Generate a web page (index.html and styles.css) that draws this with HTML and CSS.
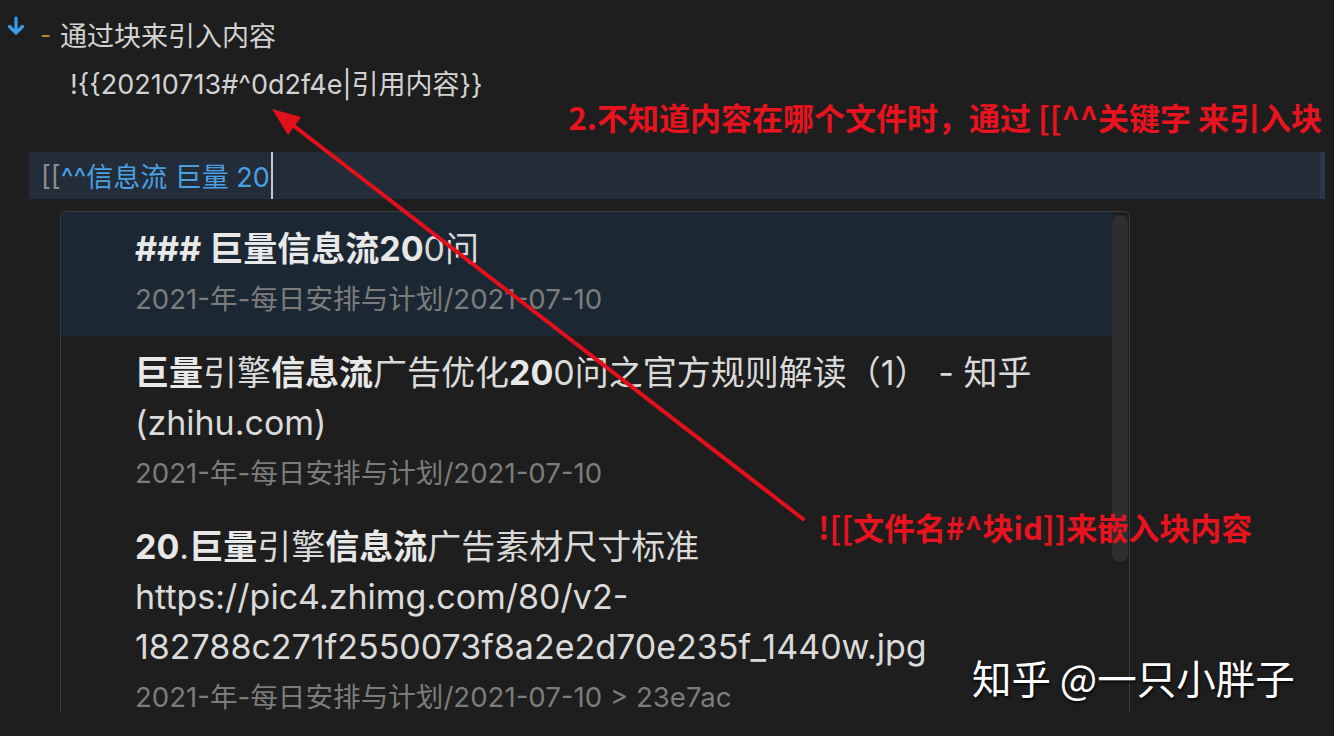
FILE: index.html
```html
<!DOCTYPE html>
<html lang="zh-CN">
<head>
<meta charset="utf-8">
<title>块引用</title>
<link rel="stylesheet" href="styles.css">
</head>
<body>
<div class="page">
  <div class="editor">
    <div class="row bullet-row">
      <span class="collapse-icon">
        <svg width="18" height="20" viewBox="0 0 18 20"><path d="M9 2 V17 M2.5 10.5 L9 17 L15.5 10.5" fill="none" stroke="#3b9de9" stroke-width="3.2" stroke-linecap="round" stroke-linejoin="round"/></svg>
      </span>
      <span class="dash">-</span>
      <span class="text">通过块来引入内容</span>
    </div>
    <div class="row child-row">
      <span class="text">!{{20210713#^0d2f4e|引用内容}}</span>
    </div>
    <div class="active-line">
      <span class="brackets">[[</span><span class="query">^^信息流 巨量 20</span><span class="cursor"></span>
    </div>
    <div class="popup">
      <div class="list">
        <div class="item selected">
          <div class="title"><b>### 巨量信息流20</b>0问</div>
          <div class="path">2021-年-每日安排与计划/2021-07-10</div>
        </div>
        <div class="item">
          <div class="title"><b>巨量</b>引擎<b>信息流</b>广告优化<b>20</b>0问之官方规则解读（1） - 知乎<br>(zhihu.com)</div>
          <div class="path">2021-年-每日安排与计划/2021-07-10</div>
        </div>
        <div class="item">
          <div class="title"><b>20</b>.<b>巨量</b>引擎<b>信息流</b>广告素材尺寸标准<br>https://pic4.zhimg.com/80/v2-<br>182788c271f2550073f8a2e2d70e235f_1440w.jpg</div>
          <div class="path">2021-年-每日安排与计划/2021-07-10 &gt; 23e7ac</div>
        </div>
      </div>
      <div class="gutter"><div class="thumb"></div></div>
    </div>
  </div>

  <svg class="arrow" width="1334" height="736" viewBox="0 0 1334 736">
    <line x1="803" y1="519" x2="294" y2="126" stroke="#e3101c" stroke-width="4" stroke-linecap="round"/>
    <polygon points="272,109 301,117 288,135" fill="#e3101c"/>
  </svg>
  <div class="note note-top">2.不知道内容在哪个文件时，通过 [[^^关键字 来引入块</div>
  <div class="note note-bottom">![[文件名#^块id]]来嵌入块内容</div>
  <div class="watermark">知乎 @一只小胖子</div>
</div>
</body>
</html>
```

FILE: styles.css
```css
html, body {
  margin: 0;
  padding: 0;
  background: #1e1e1e;
}

.page {
  position: relative;
  width: 1334px;
  height: 736px;
  overflow: hidden;
  background: #1e1e1e;
  font-family: "Inter", "Noto Sans CJK SC", sans-serif;
  color: #d2d2d2;
}

.editor {
  display: flex;
  flex-direction: column;
  padding-top: 10px;
}

.row {
  display: flex;
  align-items: center;
  height: 48px;
  font-size: 27px;
}

.bullet-row {
  padding-left: 7px;
}

.collapse-icon {
  display: flex;
  width: 33px;
  height: 48px;
  align-items: flex-start;
  padding-top: 6px;
  box-sizing: border-box;
}

.dash {
  width: 20px;
  color: #c98238;
  font-size: 24px;
}

.child-row {
  padding-left: 70px;
}

.active-line {
  display: flex;
  align-items: center;
  margin-top: 46px;
  margin-left: 29px;
  width: 1296px;
  height: 47px;
  padding-left: 12px;
  box-sizing: border-box;
  background: #222d39;
  border-right: 5px solid #28384a;
  font-size: 27px;
}

.brackets {
  color: #8d8d8d;
}

.query {
  color: #4c9fe0;
}

.cursor {
  width: 2px;
  height: 47px;
  margin-left: 1px;
  background: #c8c8c8;
}

.popup {
  display: flex;
  margin-top: 12px;
  margin-left: 60px;
  width: 1070px;
  height: 501px;
  box-sizing: border-box;
  border: 1px solid #3b3b3b;
  border-bottom: none;
  border-radius: 6px 6px 0 0;
  background: #1e1e1e;
  overflow: hidden;
}

.list {
  flex: 1;
  display: flex;
  flex-direction: column;
}

.item {
  padding: 12px 20px 12px 74px;
}

.item.selected {
  background: #1b2833;
}

.title {
  font-size: 34px;
  line-height: 50px;
  color: #dadada;
}

.title b {
  font-weight: 700;
  color: #e8e8e8;
}

.path {
  font-size: 27.6px;
  line-height: 50px;
  color: #7c7c7c;
}

.gutter {
  width: 17px;
  padding-top: 3px;
}

.thumb {
  width: 16px;
  height: 347px;
  border-radius: 8px;
  background: #2e2e2e;
}

.arrow {
  position: absolute;
  top: 0;
  left: 0;
  pointer-events: none;
}

.note {
  position: absolute;
  color: #e8131f;
  font-family: "Noto Sans CJK SC", sans-serif;
  font-weight: 700;
  font-size: 31px;
  line-height: 36px;
  white-space: nowrap;
}

.note-top {
  right: 12px;
  top: 99px;
}

.note-bottom {
  left: 818px;
  top: 509px;
}

.watermark {
  position: absolute;
  left: 972px;
  top: 652px;
  font-family: "Noto Sans CJK SC", sans-serif;
  font-size: 39.5px;
  line-height: 50px;
  font-weight: 400;
  color: #ffffff;
  text-shadow: 1px 2px 3px rgba(0, 0, 0, 0.8);
  white-space: nowrap;
}
```
